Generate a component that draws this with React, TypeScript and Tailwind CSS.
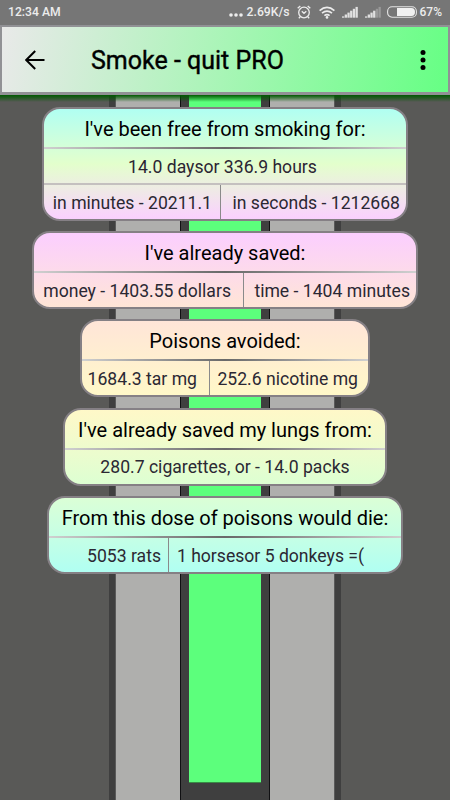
import clsx from "clsx";

interface Cell {
  text: string;
  className: string;
}

interface StatCardProps {
  title: string;
  className: string;
  summary?: string;
  cells: Cell[];
}

const CARDS: StatCardProps[] = [
  {
    title: "I've been free from smoking for:",
    className: "w-[366px] h-[114px] from-[#b0fff2] via-[#e3ffcc] to-[#fad0ff]",
    summary: "14.0 daysor 336.9 hours",
    cells: [
      { text: "in minutes - 20211.1", className: "w-[176px] pr-[8px] justify-end" },
      { text: "in seconds - 1212668", className: "flex-1 pr-[6px] justify-end" },
    ],
  },
  {
    title: "I've already saved:",
    className: "w-[386px] h-[78px] from-[#fbceff] to-[#ffe5d6]",
    cells: [
      { text: "money - 1403.55 dollars", className: "w-[209px] pr-[12px] justify-end" },
      { text: "time - 1404 minutes", className: "flex-1 pr-[6px] justify-end" },
    ],
  },
  {
    title: "Poisons avoided:",
    className: "w-[290px] h-[78px] from-[#ffe5d8] to-[#fff8c8]",
    cells: [
      { text: "1684.3 tar mg", className: "w-[127px] pr-[12px] justify-end" },
      { text: "252.6 nicotine mg", className: "flex-1 pr-[10px] justify-end" },
    ],
  },
  {
    title: "I've already saved my lungs from:",
    className: "w-[324px] h-[78px] from-[#fff8c8] to-[#ddffd2]",
    cells: [{ text: "280.7 cigarettes, or - 14.0 packs", className: "flex-1 justify-center" }],
  },
  {
    title: "From this dose of poisons would die:",
    className: "w-[356px] h-[78px] from-[#dbffd6] to-[#b0fff2]",
    cells: [
      { text: "5053 rats", className: "w-[119px] pr-[7px] justify-end" },
      { text: "1 horsesor 5 donkeys =(", className: "flex-1 pr-[37px] justify-end" },
    ],
  },
];

function StatusBar() {
  return (
    <div className="flex h-[25px] items-center bg-[#767676] pl-[8px] pr-[8px] text-[12.2px] font-medium text-[#ececec]">
      <span>12:34 AM</span>
      <div className="ml-auto flex items-center">
        <svg className="mr-[3px] h-[14px] w-[15px]" viewBox="0 0 15 14" fill="currentColor">
          <circle cx="2" cy="10" r="1.8" />
          <circle cx="7" cy="10" r="1.8" />
          <circle cx="12" cy="10" r="1.8" />
        </svg>
        <span>2.69K/s</span>
        {/* Alarm */}
        <svg className="ml-[7px] h-[14px] w-[14px]" viewBox="0 0 14 14" fill="none" stroke="currentColor" strokeWidth="1.3">
          <circle cx="7" cy="7.5" r="5.3" />
          <path d="M4.8 6.2 7 8.3l2.3-2M.7 3.3 3.3 1M13.3 3.3 10.7 1M3.2 11.8 1.8 13.3M10.8 11.8l1.4 1.5" />
        </svg>
        {/* Wifi */}
        <svg className="ml-[8px] h-[13px] w-[16px]" viewBox="0 0 16 13" fill="none" stroke="currentColor" strokeWidth="1.7">
          <path d="M.6 4.6Q8-1.8 15.4 4.6M3 7.2q5-4.2 10 0M5.4 9.6q2.6-2.1 5.2 0" />
          <circle cx="8" cy="11.4" r="1.3" fill="currentColor" stroke="none" />
        </svg>
        <Signal className="ml-[7px]" dimFrom={7} />
        <Signal className="ml-[7px]" dimFrom={4} />
        {/* Battery */}
        <svg className="ml-[6px] mr-[3px] h-[12px] w-[30px]" viewBox="0 0 30 12">
          <rect x=".6" y=".8" width="28.8" height="10.4" rx="4.5" fill="none" stroke="#e4e4e4" strokeWidth="1.1" />
          <path d="M10 2.1h14.5q3.5 0 3.5 3.9t-3.5 3.9H10z" fill="#f0f0f0" />
        </svg>
        <span className="text-[12px]">67%</span>
      </div>
    </div>
  );
}

function Signal({ className, dimFrom }: { className: string; dimFrom: number }) {
  return (
    <svg className={clsx("h-[12px] w-[16px]", className)} viewBox="0 0 16 12" fill="currentColor">
      {[0, 1, 2, 3, 4, 5].map((i) => (
        <rect
          key={i}
          x={i * 2.7}
          y={10.4 - i * 1.9}
          width="2.3"
          height={1.3 + i * 1.9}
          opacity={i < dimFrom ? 0.9 : 0.3}
        />
      ))}
    </svg>
  );
}

function Toolbar() {
  return (
    <header className="flex h-[70px] items-center border-2 border-b-[3px] border-[#919195] bg-linear-[100deg,#e9e9e9,#a8f5b6_50%,#66ff84]">
      <svg className="ml-[23px] h-[20px] w-[20px]" viewBox="0 0 20 20" fill="none" stroke="#000" strokeWidth="2">
        <path d="M19.5 10H1.7M10.2 1 1.2 10l9 9" />
      </svg>
      <h1 className="ml-[46px] pt-[3px] text-[25px] text-black [-webkit-text-stroke:0.4px_#000]">Smoke - quit PRO</h1>
      <svg className="ml-auto mr-[22px] h-[20px] w-[6px]" viewBox="0 0 6 20">
        <circle cx="3" cy="2.5" r="2.5" />
        <circle cx="3" cy="10" r="2.5" />
        <circle cx="3" cy="17.5" r="2.5" />
      </svg>
    </header>
  );
}

function StatCard({ title, className, summary, cells }: StatCardProps) {
  return (
    <section
      className={clsx(
        "flex flex-col overflow-hidden rounded-[18px] border-2 border-[#858085] bg-linear-to-b",
        className
      )}
    >
      <h2 className="flex h-[38px] shrink-0 items-center justify-center whitespace-nowrap pt-[2px] text-[20px] text-black">
        {title}
      </h2>
      <div className="h-[2px] shrink-0 bg-linear-to-r from-[#d0d0d0] via-[#696969] to-[#d0d0d0]" />
      {summary && (
        <>
          <p className="flex h-[34px] shrink-0 items-center justify-center pr-[5px] pt-[2px] text-[17.6px] text-[#2b2533]">
            {summary}
          </p>
          <div className="h-[2px] shrink-0 bg-[#c4c0bf]" />
        </>
      )}
      <div className="flex flex-1 text-[17.6px] text-[#2b2833]">
        {cells.map((cell, i) => (
          <div
            key={cell.text}
            className={clsx("flex items-center whitespace-nowrap", i > 0 && "border-l border-[#8a8a8a]", cell.className)}
          >
            <span className="pt-[2px]">{cell.text}</span>
          </div>
        ))}
      </div>
    </section>
  );
}

function Road() {
  return (
    <div className="col-start-1 row-start-1 flex justify-center bg-[#595957]">
      <div className="w-[6px] bg-[#3f3f3f]" />
      <div className="w-[65px] border-l border-[#5a5a5a] bg-[#afafad]" />
      <div className="w-[90px] border-x border-[#101012] bg-[#3f3f3f] px-[8px]">
        <div className="h-[688px] border-b border-[#388b45] bg-[#5cff7c]" />
      </div>
      <div className="w-[65px] border-r border-[#5a5a5a] bg-[#afafad]" />
      <div className="w-[6px] bg-[#3f3f3f]" />
    </div>
  );
}

export default function App() {
  return (
    <div className="flex h-[800px] w-[450px] flex-col overflow-hidden font-['Roboto',sans-serif]">
      <StatusBar />
      <Toolbar />
      <main className="grid flex-1 grid-cols-1 grid-rows-1">
        <Road />
        <div className="z-10 col-start-1 row-start-1 flex flex-col items-center">
          <div className="mb-[5px] h-[7px] w-full shrink-0 bg-linear-to-b from-[#005a00] to-transparent" />
          <div className="flex flex-col items-center gap-[10.2px]">
            {CARDS.map((card) => (
              <StatCard key={card.title} {...card} />
            ))}
          </div>
        </div>
      </main>
    </div>
  );
}
